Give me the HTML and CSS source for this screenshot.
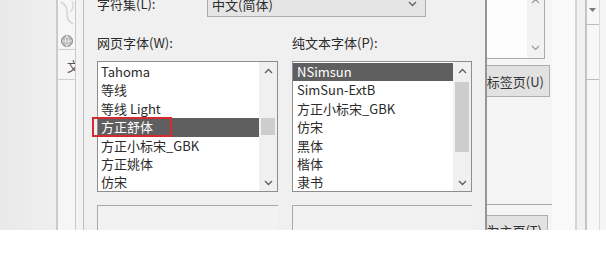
FILE: index.html
```html
<!DOCTYPE html>
<html>
<head>
    <meta charset="UTF-8">
    <link rel="stylesheet" href="styles.css">
</head>
<body>
    <div class="screen">
        <div class="bg-left"></div>
        <div class="bg-tabs">
            <svg class="tab-deco" width="18" height="28" viewBox="0 0 18 28">
                <path d="M3 2 Q10 6 9 13 Q8 20 15 24" fill="none" stroke="#d4d4d4" stroke-width="1.5"/>
                <path d="M14 1 Q17 8 12 12" fill="none" stroke="#d8d8d8" stroke-width="1.5"/>
            </svg>
            <div class="tab-globe">
                <svg width="14" height="14" viewBox="0 0 14 14">
                    <circle cx="7" cy="7" r="5.5" fill="#b9b9b9" stroke="#8c8c8c" stroke-width="1"/>
                    <path d="M2 7 H12 M7 1.5 Q3.5 7 7 12.5 M7 1.5 Q10.5 7 7 12.5" fill="none" stroke="#e6e6e6" stroke-width="1"/>
                </svg>
            </div>
            <div class="tab-char">文</div>
        </div>
        <div class="bg-gutter"></div>

        <div class="dialog">
            <div class="charset-row">
                <span class="label">字符集(L):</span>
                <div class="combo">
                    <span>中文(简体)</span>
                    <svg width="9" height="6" viewBox="0 0 9 6"><path d="M1 1 L4.5 4.5 L8 1" fill="none" stroke="#666" stroke-width="1.4"/></svg>
                </div>
            </div>

            <div class="columns">
                <div class="col">
                    <div class="label">网页字体(W):</div>
                    <div class="listbox">
                        <ul class="items">
                            <li>Tahoma</li>
                            <li>等线</li>
                            <li>等线 Light</li>
                            <li class="selected">方正舒体</li>
                            <li>方正小标宋_GBK</li>
                            <li>方正姚体</li>
                            <li>仿宋</li>
                        </ul>
                        <div class="scrollbar">
                            <div class="arrow">
                                <svg width="9" height="6" viewBox="0 0 9 6"><path d="M1 5 L4.5 1.5 L8 5" fill="none" stroke="#606060" stroke-width="1.4"/></svg>
                            </div>
                            <div class="track">
                                <div class="thumb thumb-web"></div>
                            </div>
                            <div class="arrow">
                                <svg width="9" height="6" viewBox="0 0 9 6"><path d="M1 1 L4.5 4.5 L8 1" fill="none" stroke="#606060" stroke-width="1.4"/></svg>
                            </div>
                        </div>
                        <div class="mark"></div>
                    </div>
                    <div class="preview"></div>
                </div>

                <div class="col">
                    <div class="label">纯文本字体(P):</div>
                    <div class="listbox">
                        <ul class="items">
                            <li class="selected">NSimsun</li>
                            <li>SimSun-ExtB</li>
                            <li>方正小标宋_GBK</li>
                            <li>仿宋</li>
                            <li>黑体</li>
                            <li>楷体</li>
                            <li>隶书</li>
                        </ul>
                        <div class="scrollbar">
                            <div class="arrow">
                                <svg width="9" height="6" viewBox="0 0 9 6"><path d="M1 5 L4.5 1.5 L8 5" fill="none" stroke="#606060" stroke-width="1.4"/></svg>
                            </div>
                            <div class="track">
                                <div class="thumb thumb-plain"></div>
                            </div>
                            <div class="arrow">
                                <svg width="9" height="6" viewBox="0 0 9 6"><path d="M1 1 L4.5 4.5 L8 1" fill="none" stroke="#606060" stroke-width="1.4"/></svg>
                            </div>
                        </div>
                    </div>
                    <div class="preview"></div>
                </div>
            </div>
        </div>

        <div class="bg-right">
            <div class="bg-panel">
                <div class="mini-list">
                    <div class="mini-scroll">
                        <svg width="9" height="6" viewBox="0 0 9 6"><path d="M1 5 L4.5 1.5 L8 5" fill="none" stroke="#9a9a9a" stroke-width="1.2"/></svg>
                        <svg width="9" height="6" viewBox="0 0 9 6"><path d="M1 1 L4.5 4.5 L8 1" fill="none" stroke="#9a9a9a" stroke-width="1.2"/></svg>
                    </div>
                </div>
                <div class="bg-button">新标签页(U)</div>
                <div class="bg-rule"></div>
                <div class="bg-button bg-button-low">设为主页(T)</div>
            </div>
            <div class="bg-space"></div>
            <div class="bg-strip">
                <div class="strip-inner">
                    <svg width="7" height="4" viewBox="0 0 7 4"><path d="M0 0 H7 L3.5 4 Z" fill="#7a7a7a"/></svg>
                    <div class="strip-line"></div>
                    <div class="strip-line strip-line-low"></div>
                </div>
            </div>
        </div>
    </div>
</body>
</html>
```

FILE: styles.css
```css
* {
    box-sizing: border-box;
}

body {
    margin: 0;
    background-color: #fff;
    font-family: "Noto Sans CJK SC", "Liberation Sans", sans-serif;
    font-size: 13px;
    color: #2b2b2b;
}

.screen {
    display: flex;
    width: 606px;
    height: 230px;
    overflow: hidden;
    background-color: #f0f0f0;
}

/* window behind the dialog, left side */
.bg-left {
    width: 58px;
    flex-shrink: 0;
    background: linear-gradient(to right, #e9e9e9, #efefef);
    border-right: 2px solid #cbcbcb;
}

.bg-tabs {
    width: 18px;
    flex-shrink: 0;
    display: flex;
    flex-direction: column;
    background-color: #f6f6f6;
    border-right: 1px solid #c9c9c9;
    overflow: hidden;
}

.tab-deco {
    display: block;
    margin-bottom: 6px;
}

.tab-globe {
    height: 16px;
    display: flex;
    justify-content: center;
    border-bottom: 1px solid #d0d0d0;
}

.tab-char {
    height: 30px;
    padding: 8px 0 0 9px;
    color: #555;
    white-space: nowrap;
    line-height: 16px;
    border-bottom: 1px solid #cfcfcf;
}

.bg-gutter {
    width: 7px;
    flex-shrink: 0;
    background-color: #f3f3f3;
}

/* the font dialog */
.dialog {
    width: 404px;
    flex-shrink: 0;
    padding: 0 13px;
    border-left: 1px solid #bdbdbd;
    border-right: 2px solid #969696;
    background-color: #f0f0f0;
}

.charset-row {
    display: flex;
    align-items: center;
    height: 26px;
    margin-top: -9px;
}

.label {
    line-height: 18px;
    white-space: nowrap;
}

.charset-row .label {
    width: 110px;
}

.combo {
    width: 219px;
    height: 26px;
    display: flex;
    align-items: center;
    justify-content: space-between;
    padding: 0 8px 0 4px;
    background-color: #e5e5e5;
    border: 1px solid #adadad;
}

.columns {
    display: flex;
    gap: 14px;
    margin-top: 17px;
}

.col:first-child {
    width: 181px;
}

.col:last-child {
    width: 180px;
}

.col .label {
    margin-bottom: 9px;
}

.listbox {
    position: relative;
    display: flex;
    height: 131px;
    background-color: #fff;
    border: 1px solid #8e8e8e;
}

.items {
    flex: 1;
    list-style: none;
    margin: 0;
    padding: 1px 0 0 0;
    overflow: hidden;
}

.items li {
    height: 18.4px;
    line-height: 18.4px;
    padding-left: 3px;
    white-space: nowrap;
}

.col:last-child .items li {
    padding-left: 4px;
}

.items li.selected {
    background-color: #5f5f5f;
    color: #fff;
}

.scrollbar {
    width: 18px;
    display: flex;
    flex-direction: column;
    background-color: #f0f0f0;
}

.arrow {
    height: 17px;
    display: flex;
    align-items: center;
    justify-content: center;
}

.track {
    flex: 1;
    padding: 0 2px;
}

.thumb {
    background-color: #cdcdcd;
}

.thumb-web {
    margin-top: 39px;
    height: 17px;
}

.thumb-plain {
    margin-top: 3px;
    height: 70px;
}

/* red annotation box */
.mark {
    position: absolute;
    left: -6px;
    top: 55px;
    width: 80px;
    height: 20px;
    border: 2px solid #d62a30;
}

.preview {
    height: 40px;
    margin-top: 13px;
    background-color: #f2f2f2;
    border-top: 1px solid #a9a9a9;
    border-left: 1px solid #a9a9a9;
}

/* window behind the dialog, right side */
.bg-right {
    flex: 1;
    display: flex;
    background-color: #f5f5f5;
}

.bg-panel {
    width: 65px;
    flex-shrink: 0;
}

.mini-list {
    width: 58px;
    height: 59px;
    display: flex;
    justify-content: flex-end;
    background-color: #fcfcfc;
    border-right: 1px solid #a9a9a9;
    border-bottom: 1px solid #a9a9a9;
}

.mini-scroll {
    width: 17px;
    display: flex;
    flex-direction: column;
    align-items: center;
    justify-content: space-between;
    padding: 0 0 7px;
    margin-top: -2px;
    background-color: #f2f2f2;
}

.bg-button {
    width: 63px;
    height: 32px;
    margin-top: 6px;
    display: flex;
    align-items: center;
    justify-content: flex-end;
    padding-right: 5px;
    overflow: hidden;
    white-space: nowrap;
    color: #333;
    background-color: #e2e2e2;
    border: 1px solid #adadad;
    border-left: none;
}

.bg-rule {
    width: 65px;
    margin-top: 107px;
    border-top: 1px solid #a5a5a5;
}

.bg-button-low {
    width: 61px;
    height: 30px;
    margin-top: 10px;
}

.bg-space {
    width: 23px;
    flex-shrink: 0;
    background-color: #f9f9f9;
}

.bg-strip {
    width: 25px;
    flex-shrink: 0;
    padding-left: 8px;
    background-color: #f1f1f1;
    border-left: 2px solid #d6d6d6;
    border-right: 1px solid #dcdcdc;
}

.strip-inner {
    height: 100%;
    display: flex;
    flex-direction: column;
    align-items: flex-end;
    padding: 8px 3px 0 0;
    border-left: 2px solid #c4c4c4;
    background-color: #f7f7f7;
}

.strip-line {
    width: 13px;
    margin-top: 12px;
    border-top: 1px solid #bcbcbc;
    margin-right: -3px;
}

.strip-line-low {
    margin-top: 54px;
}
```
